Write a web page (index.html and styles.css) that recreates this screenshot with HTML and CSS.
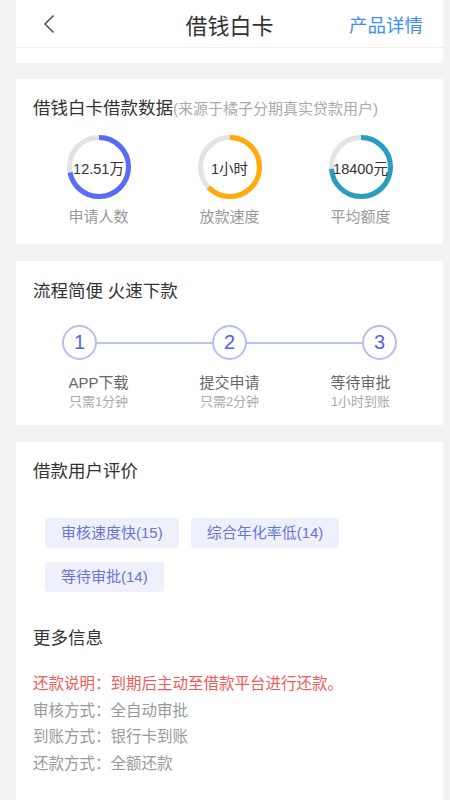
FILE: index.html
```html
<!DOCTYPE html>
<html lang="zh-CN">
<head>
    <meta charset="UTF-8">
    <meta name="viewport" content="width=device-width, initial-scale=1.0">
    <title>借钱白卡</title>
    <link rel="stylesheet" href="styles.css">
</head>
<body>
    <div class="page">
        <div class="header">
            <a href="#" class="back">
                <svg width="12" height="20" viewBox="0 0 12 20"><path d="M10.5 1.5 L2 10 L10.5 18.5" fill="none" stroke="#555" stroke-width="1.6"/></svg>
            </a>
            <div class="title">借钱白卡</div>
            <a href="#" class="detail">产品详情</a>
        </div>
        <div class="strip"></div>

        <!-- 借款数据 -->
        <div class="card stats-card">
            <h2 class="card-title">借钱白卡借款数据<span class="source">(来源于橘子分期真实贷款用户)</span></h2>
            <div class="stats">
                <div class="stat">
                    <div class="ring">
                        <svg width="64" height="64" viewBox="0 0 64 64">
                            <circle cx="32" cy="32" r="29.5" class="track"/>
                            <circle cx="32" cy="32" r="29.5" class="bar blue" pathLength="100" stroke-dasharray="72 100"/>
                        </svg>
                        <span class="ring-value">12.51万</span>
                    </div>
                    <div class="stat-label">申请人数</div>
                </div>
                <div class="stat">
                    <div class="ring">
                        <svg width="64" height="64" viewBox="0 0 64 64">
                            <circle cx="32" cy="32" r="29.5" class="track"/>
                            <circle cx="32" cy="32" r="29.5" class="bar orange" pathLength="100" stroke-dasharray="63 100"/>
                        </svg>
                        <span class="ring-value">1小时</span>
                    </div>
                    <div class="stat-label">放款速度</div>
                </div>
                <div class="stat">
                    <div class="ring">
                        <svg width="64" height="64" viewBox="0 0 64 64">
                            <circle cx="32" cy="32" r="29.5" class="track"/>
                            <circle cx="32" cy="32" r="29.5" class="bar teal" pathLength="100" stroke-dasharray="74 100"/>
                        </svg>
                        <span class="ring-value">18400元</span>
                    </div>
                    <div class="stat-label">平均额度</div>
                </div>
            </div>
        </div>

        <!-- 流程 -->
        <div class="card steps-card">
            <h2 class="card-title">流程简便 火速下款</h2>
            <div class="steps">
                <div class="step-num">1</div>
                <div class="step-line"></div>
                <div class="step-num">2</div>
                <div class="step-line"></div>
                <div class="step-num">3</div>
            </div>
            <div class="step-texts">
                <div class="step-text">
                    <div class="step-name">APP下载</div>
                    <div class="step-sub">只需1分钟</div>
                </div>
                <div class="step-text">
                    <div class="step-name">提交申请</div>
                    <div class="step-sub">只需2分钟</div>
                </div>
                <div class="step-text">
                    <div class="step-name">等待审批</div>
                    <div class="step-sub">1小时到账</div>
                </div>
            </div>
        </div>

        <!-- 评价 + 更多信息 -->
        <div class="card review-card">
            <h2 class="card-title">借款用户评价</h2>
            <div class="tags">
                <span class="tag">审核速度快(15)</span>
                <span class="tag">综合年化率低(14)</span>
                <span class="tag">等待审批(14)</span>
            </div>

            <h2 class="card-title more-title">更多信息</h2>
            <div class="info">
                <p class="info-row warn">还款说明：到期后主动至借款平台进行还款。</p>
                <p class="info-row">审核方式：全自动审批</p>
                <p class="info-row">到账方式：银行卡到账</p>
                <p class="info-row">还款方式：全额还款</p>
            </div>
        </div>
    </div>
</body>
</html>
```
FILE: styles.css
```css
body {
    margin: 0;
    padding: 0;
    background: #f2f2f2;
    font-family: "Liberation Sans", "Noto Sans CJK SC", sans-serif;
    color: #333;
    overflow: hidden;
}

.page {
    width: 427px;
    margin-left: 16px;
}

.header {
    height: 47px;
    background: #fff;
    border-bottom: 1px solid #eeeeee;
    display: grid;
    grid-template-columns: 1fr auto 1fr;
    align-items: center;
}

.back {
    padding-left: 27px;
    display: flex;
    align-items: center;
    height: 100%;
}

.title {
    font-size: 22px;
    color: #333;
}

.detail {
    justify-self: end;
    padding-right: 20px;
    font-size: 18.5px;
    color: #3a8ef6;
    text-decoration: none;
}

.strip {
    height: 15px;
    background: #fff;
    margin-bottom: 16px;
}

.card {
    background: #fff;
    padding: 18px 17px 0;
    margin-bottom: 17px;
}

.card-title {
    margin: 0;
    font-size: 17.5px;
    font-weight: normal;
    line-height: 22px;
    color: #333;
}

.source {
    font-size: 15px;
    color: #aaa;
}

/* 借款数据 */
.stats-card {
    height: 147px;
}

.stats {
    display: grid;
    grid-template-columns: 1fr 1fr 1fr;
    margin-top: 15px;
}

.stat {
    display: flex;
    flex-direction: column;
    align-items: center;
}

.ring {
    position: relative;
    width: 64px;
    height: 64px;
}

.ring svg {
    display: block;
    transform: rotate(-90deg);
}

.track {
    fill: none;
    stroke: #e3e3e3;
    stroke-width: 5;
}

.bar {
    fill: none;
    stroke-width: 5;
}

.blue { stroke: #5a6bf7; }
.orange { stroke: #ffac0a; }
.teal { stroke: #2a9dbd; }

.ring-value {
    position: absolute;
    inset: 0;
    display: flex;
    align-items: center;
    justify-content: center;
    font-size: 14.5px;
    color: #333;
    white-space: nowrap;
}

.stat-label {
    margin-top: 8px;
    font-size: 15px;
    line-height: 20px;
    color: #999;
}

/* 流程 */
.steps-card {
    padding-top: 19px;
    height: 145px;
}

.steps {
    display: flex;
    align-items: center;
    padding: 0 29px;
    margin-top: 23px;
}

.step-num {
    width: 31px;
    height: 31px;
    border: 2px solid #b5bef6;
    border-radius: 50%;
    display: flex;
    align-items: center;
    justify-content: center;
    font-size: 20px;
    color: #4f63ee;
}

.step-line {
    flex: 1;
    height: 2px;
    background: #b9c2f6;
}

.step-texts {
    display: grid;
    grid-template-columns: 1fr 1fr 1fr;
    margin-top: 13px;
    text-align: center;
}

.step-name {
    font-size: 15px;
    line-height: 20px;
    color: #666;
}

.step-sub {
    font-size: 13px;
    line-height: 18px;
    color: #aaa;
}

/* 评价 */
.review-card {
    min-height: 360px;
}

.tags {
    display: flex;
    flex-wrap: wrap;
    gap: 14px 12px;
    margin: 36px 0 0 12px;
    width: 320px;
}

.tag {
    background: #eef0fc;
    color: #6a74d6;
    font-size: 15px;
    line-height: 30px;
    padding: 0 16px;
    border-radius: 4px;
}

.more-title {
    margin-top: 35px;
}

.info {
    margin-top: 22px;
}

.info-row {
    margin: 0;
    font-size: 15.5px;
    line-height: 26.5px;
    color: #999;
}

.info-row.warn {
    color: #f25a5a;
}
```
